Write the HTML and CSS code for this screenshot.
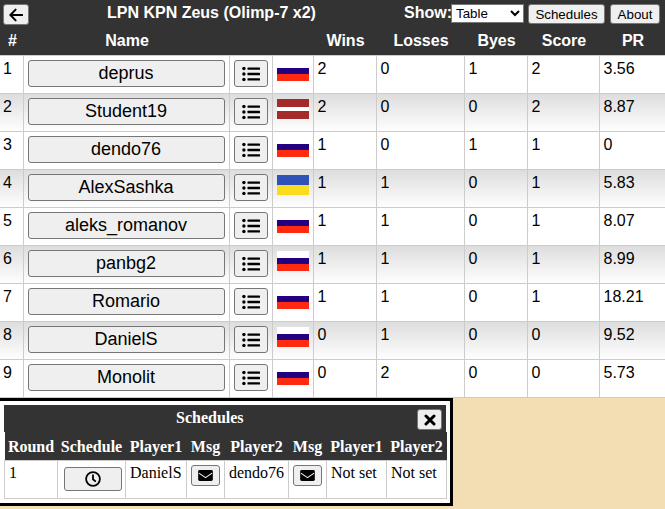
FILE: index.html
```html
<!DOCTYPE html>
<html lang="en">
<head>
  <meta charset="UTF-8">
  <meta name="viewport" content="width=device-width, initial-scale=1.0">
  <title>LPN KPN Zeus (Olimp-7 x2)</title>
  <link rel="stylesheet" href="styles.css">
</head>
<body>
  <svg class="icon-defs" aria-hidden="true">
    <symbol id="icon-list" viewBox="0 0 18 14">
      <circle cx="1.9" cy="1.6" r="1.7"/><circle cx="1.9" cy="7" r="1.7"/><circle cx="1.9" cy="12.4" r="1.7"/>
      <rect x="5.5" y="0.4" width="12.5" height="2.4" rx="0.5"/><rect x="5.5" y="5.8" width="12.5" height="2.4" rx="0.5"/><rect x="5.5" y="11.2" width="12.5" height="2.4" rx="0.5"/>
    </symbol>
    <symbol id="icon-mail" viewBox="0 0 16 12">
      <rect width="16" height="12" rx="1.6"/>
      <path d="M0.8 3.4 L8 8.4 L15.2 3.4" fill="none" stroke="#efefef" stroke-width="1.2"/>
    </symbol>
    <symbol id="icon-clock" viewBox="0 0 16 16">
      <circle cx="8" cy="8" r="6.9" fill="none" stroke="#000" stroke-width="1.8"/>
      <path d="M8 3.6 V8.3 L10.8 10.6" fill="none" stroke="#000" stroke-width="1.8"/>
    </symbol>
    <symbol id="icon-close" viewBox="0 0 12 12">
      <path d="M2 2 L10 10 M10 2 L2 10" fill="none" stroke="#000" stroke-width="3" stroke-linecap="round"/>
    </symbol>
    <symbol id="icon-back" viewBox="0 0 14 14">
      <path d="M6.6 1.6 L1.4 7 L6.6 12.4 M1.8 7 H13.4" fill="none" stroke="#000" stroke-width="2" stroke-linecap="round"/>
    </symbol>
  </svg>

  <div class="toolbar">
    <button class="back-btn"><svg class="icon-back"><use href="#icon-back"/></svg></button>
    <div class="title">LPN KPN Zeus (Olimp-7 x2)</div>
    <label class="show-label" for="showSelect">Show:</label>
    <select id="showSelect" class="show-select"><option>Table</option></select>
    <button class="top-btn schedules-btn">Schedules</button>
    <button class="top-btn about-btn">About</button>
  </div>

  <table class="standings">
    <colgroup>
      <col class="c-num"><col class="c-name"><col class="c-list"><col class="c-flag"><col class="c-wins"><col class="c-losses"><col class="c-byes"><col class="c-score"><col class="c-pr">
    </colgroup>
    <thead>
      <tr><th>#</th><th>Name</th><th></th><th></th><th>Wins</th><th>Losses</th><th>Byes</th><th>Score</th><th>PR</th></tr>
    </thead>
    <tbody>
      <tr><td>1</td><td><button class="name-btn">deprus</button></td><td><button class="list-btn"><svg class="icon-list"><use href="#icon-list"/></svg></button></td><td><div class="flag flag-ru"></div></td><td>2</td><td>0</td><td>1</td><td>2</td><td>3.56</td></tr>
      <tr><td>2</td><td><button class="name-btn">Student19</button></td><td><button class="list-btn"><svg class="icon-list"><use href="#icon-list"/></svg></button></td><td><div class="flag flag-lv"></div></td><td>2</td><td>0</td><td>0</td><td>2</td><td>8.87</td></tr>
      <tr><td>3</td><td><button class="name-btn">dendo76</button></td><td><button class="list-btn"><svg class="icon-list"><use href="#icon-list"/></svg></button></td><td><div class="flag flag-ru"></div></td><td>1</td><td>0</td><td>1</td><td>1</td><td>0</td></tr>
      <tr><td>4</td><td><button class="name-btn">AlexSashka</button></td><td><button class="list-btn"><svg class="icon-list"><use href="#icon-list"/></svg></button></td><td><div class="flag flag-ua"></div></td><td>1</td><td>1</td><td>0</td><td>1</td><td>5.83</td></tr>
      <tr><td>5</td><td><button class="name-btn">aleks_romanov</button></td><td><button class="list-btn"><svg class="icon-list"><use href="#icon-list"/></svg></button></td><td><div class="flag flag-ru"></div></td><td>1</td><td>1</td><td>0</td><td>1</td><td>8.07</td></tr>
      <tr><td>6</td><td><button class="name-btn">panbg2</button></td><td><button class="list-btn"><svg class="icon-list"><use href="#icon-list"/></svg></button></td><td><div class="flag flag-ru"></div></td><td>1</td><td>1</td><td>0</td><td>1</td><td>8.99</td></tr>
      <tr><td>7</td><td><button class="name-btn">Romario</button></td><td><button class="list-btn"><svg class="icon-list"><use href="#icon-list"/></svg></button></td><td><div class="flag flag-ru"></div></td><td>1</td><td>1</td><td>0</td><td>1</td><td>18.21</td></tr>
      <tr><td>8</td><td><button class="name-btn">DanielS</button></td><td><button class="list-btn"><svg class="icon-list"><use href="#icon-list"/></svg></button></td><td><div class="flag flag-ru"></div></td><td>0</td><td>1</td><td>0</td><td>0</td><td>9.52</td></tr>
      <tr><td>9</td><td><button class="name-btn">Monolit</button></td><td><button class="list-btn"><svg class="icon-list"><use href="#icon-list"/></svg></button></td><td><div class="flag flag-ru"></div></td><td>0</td><td>2</td><td>0</td><td>0</td><td>5.73</td></tr>
    </tbody>
  </table>

  <div class="popup">
    <div class="popup-head">
      <div class="popup-title">Schedules</div>
      <button class="close-btn"><svg class="icon-close"><use href="#icon-close"/></svg></button>
    </div>
    <table class="schedules">
      <colgroup>
        <col class="s-round"><col class="s-schedule"><col class="s-player"><col class="s-msg"><col class="s-player2"><col class="s-msg"><col class="s-set"><col class="s-set2">
      </colgroup>
      <thead>
        <tr><th>Round</th><th>Schedule</th><th>Player1</th><th>Msg</th><th>Player2</th><th>Msg</th><th>Player1</th><th>Player2</th></tr>
      </thead>
      <tbody>
        <tr>
          <td>1</td>
          <td><button class="clock-btn"><svg class="icon-clock"><use href="#icon-clock"/></svg></button></td>
          <td>DanielS</td>
          <td><button class="mail-btn"><svg class="icon-mail"><use href="#icon-mail"/></svg></button></td>
          <td>dendo76</td>
          <td><button class="mail-btn"><svg class="icon-mail"><use href="#icon-mail"/></svg></button></td>
          <td>Not set</td>
          <td>Not set</td>
        </tr>
      </tbody>
    </table>
  </div>
</body>
</html>
```

FILE: styles.css
```css
body {
  margin: 0;
  height: 509px;
  overflow: hidden;
  position: relative;
  background-color: #f3deb3;
  font-family: "Liberation Sans", Arial, sans-serif;
  font-size: 16px;
}

.icon-defs {
  display: none;
}

button {
  background-color: #efefef;
  border: 1px solid #767676;
  border-radius: 3px;
  padding: 0;
  color: #000;
  font-family: "Liberation Sans", Arial, sans-serif;
}

/* top bar */
.toolbar {
  display: flex;
  align-items: flex-start;
  height: 28px;
  padding: 4px 5px 0 3px;
  box-sizing: border-box;
  background-color: #333;
  color: #fff;
}

.back-btn {
  width: 26px;
  height: 21px;
  display: flex;
  align-items: center;
  justify-content: center;
}

.icon-back {
  width: 14px;
  height: 14px;
}

.title {
  width: 209px;
  margin-left: 78px;
  margin-right: 88px;
  font-weight: bold;
  white-space: nowrap;
}

.show-label {
  font-weight: bold;
  width: 47px;
}

.show-select {
  width: 73px;
  height: 19px;
  font-family: "Liberation Sans", Arial, sans-serif;
  font-size: 13.33px;
  background-color: #fff;
  border: 1px solid #767676;
  border-radius: 0;
}

.top-btn {
  height: 20px;
  font-size: 13.33px;
}

.schedules-btn {
  width: 77px;
  margin-left: 4px;
}

.about-btn {
  width: 50px;
  margin-left: 5px;
}

/* standings */
.standings {
  width: 665px;
  table-layout: fixed;
  border-collapse: collapse;
  background-color: #fff;
}

.c-num { width: 23px; }
.c-name { width: 206px; }
.c-list { width: 43px; }
.c-flag { width: 41px; }
.c-wins { width: 63px; }
.c-losses { width: 88px; }
.c-byes { width: 63px; }
.c-score { width: 72px; }
.c-pr { width: 66px; }

.standings th {
  height: 27px;
  padding: 0 0 0 2px;
  background-color: #333;
  color: #fff;
  font-weight: bold;
  vertical-align: top;
  line-height: 26px;
}

.standings td {
  height: 38px;
  box-sizing: border-box;
  padding: 4px;
  border: 1px solid #ccc;
  vertical-align: top;
}

.standings td:first-child {
  padding-left: 3px;
  border-left: none;
}

.standings td:last-child {
  border-right: none;
}

.standings tbody tr:nth-child(even) {
  background: linear-gradient(#ddd, #fff);
}

.name-btn {
  display: block;
  width: 197px;
  height: 27px;
  font-size: 18px;
}

.list-btn {
  display: flex;
  align-items: center;
  justify-content: center;
  width: 34px;
  height: 27px;
}

.icon-list {
  width: 18px;
  height: 14px;
}

.flag {
  width: 32px;
  height: 20px;
  margin-top: 1px;
}

.flag-ru {
  background: linear-gradient(#fff 33%, #22007f 33%, #22007f 67%, #ff2a10 67%);
}

.flag-lv {
  background: linear-gradient(#a52a2a 40%, #fff 40%, #fff 60%, #a52a2a 60%);
}

.flag-ua {
  background: linear-gradient(#2f52b8 50%, #fadb1e 50%);
}

/* schedules popup */
.popup {
  position: absolute;
  left: -3px;
  top: 398px;
  width: 442px;
  padding: 4px;
  border: 3px solid #000;
  background-color: #fff;
  font-family: "Liberation Serif", "Times New Roman", serif;
}

.popup-head {
  display: flex;
  justify-content: space-between;
  height: 27px;
  padding-left: 172px;
  padding-right: 4px;
  background-color: #333;
  color: #fff;
}

.popup-title {
  font-weight: bold;
  line-height: 26px;
}

.close-btn {
  display: flex;
  align-items: center;
  justify-content: center;
  width: 25px;
  height: 21px;
  margin-top: 4px;
}

.icon-close {
  width: 12px;
  height: 12px;
}

.schedules {
  width: 442px;
  table-layout: fixed;
  border-collapse: collapse;
}

.s-round { width: 53px; }
.s-schedule { width: 68px; }
.s-player { width: 61px; }
.s-msg { width: 38px; }
.s-player2 { width: 64px; }
.s-set { width: 60px; }
.s-set2 { width: 60px; }

.schedules th {
  height: 27px;
  padding: 1px 0 0;
  background-color: #333;
  color: #fff;
  font-weight: bold;
  white-space: nowrap;
  line-height: 27px;
  vertical-align: top;
}

.schedules td {
  height: 38px;
  box-sizing: border-box;
  padding: 3px 4px;
  border: 1px solid #ccc;
  vertical-align: top;
  white-space: nowrap;
}

.clock-btn {
  display: flex;
  align-items: center;
  justify-content: center;
  width: 58px;
  height: 24px;
  margin: 3px 0 0 2px;
}

.icon-clock {
  width: 16px;
  height: 16px;
}

.mail-btn {
  display: flex;
  align-items: center;
  justify-content: center;
  width: 29px;
  height: 21px;
  margin-top: 1px;
}

.icon-mail {
  width: 15px;
  height: 11px;
}
```
